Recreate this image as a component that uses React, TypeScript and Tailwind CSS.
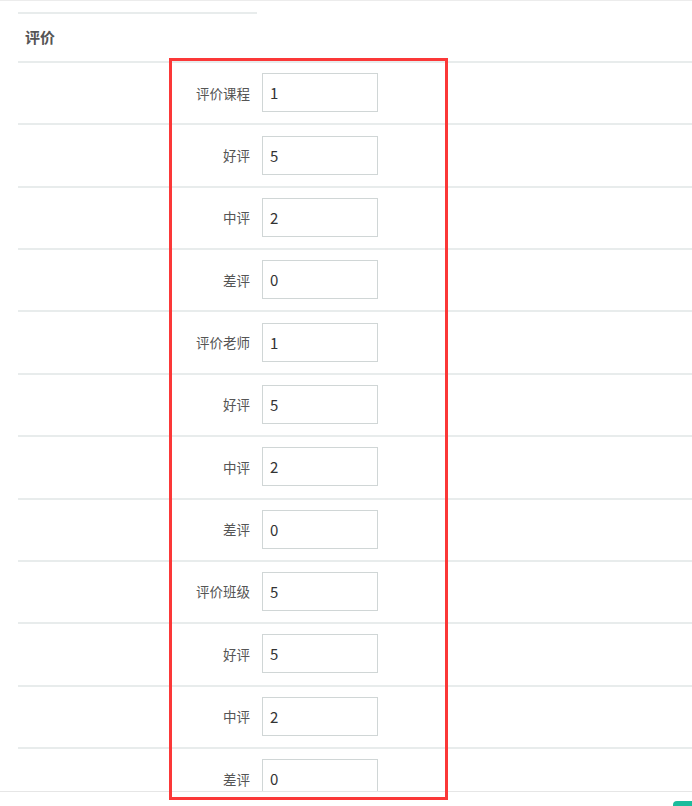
const rows = [
  { label: "评价课程", value: "1" },
  { label: "好评", value: "5" },
  { label: "中评", value: "2" },
  { label: "差评", value: "0" },
  { label: "评价老师", value: "1" },
  { label: "好评", value: "5" },
  { label: "中评", value: "2" },
  { label: "差评", value: "0" },
  { label: "评价班级", value: "5" },
  { label: "好评", value: "5" },
  { label: "中评", value: "2" },
  { label: "差评", value: "0" },
];

function FieldRow({ label, value }: { label: string; value: string }) {
  return (
    <div className="box-border flex h-[62.36px] items-center border-b-2 border-[#e8ecec] pb-[1px]">
      <label className="w-[244px] pr-[12px] text-right text-[13.5px] text-[#555]">
        {label}
      </label>
      <input
        readOnly
        value={value}
        className="box-border h-[39px] w-[116px] border border-[#d0d6d6] bg-white px-[7px] text-[15px] text-[#333] outline-none"
      />
    </div>
  );
}

export default function App() {
  return (
    <div
      className="relative h-[806px] w-[692px] overflow-hidden bg-white"
      style={{ fontFamily: '"Noto Sans CJK SC", "Noto Sans", sans-serif' }}
    >
      {/* Scrollable settings panel */}
      <div className="box-border h-[791px] overflow-hidden border-t border-[#ececec]">
        <div className="pl-[18px] pt-[11px]">
          <div className="w-[239px] border-t-2 border-[#e8ecec]" />
          <div className="box-border flex h-[49px] items-center border-b-2 border-[#e8ecec] pl-[7px]">
            <h3 className="text-[15px] font-bold text-[#555]">评价</h3>
          </div>
          {rows.map((r, i) => (
            <FieldRow key={i} label={r.label} value={r.value} />
          ))}
        </div>
      </div>

      {/* Footer */}
      <div className="border-t border-[#e6e6e6]" />
      <div className="absolute left-[673px] top-[801px] h-[20px] w-[30px] rounded-[4px] bg-[#1abc9c]" />

      {/* Highlight frame */}
      <div className="pointer-events-none absolute left-[169px] top-[58px] box-border h-[742px] w-[279px] border-[3px] border-[#fb3838]" />
    </div>
  );
}
